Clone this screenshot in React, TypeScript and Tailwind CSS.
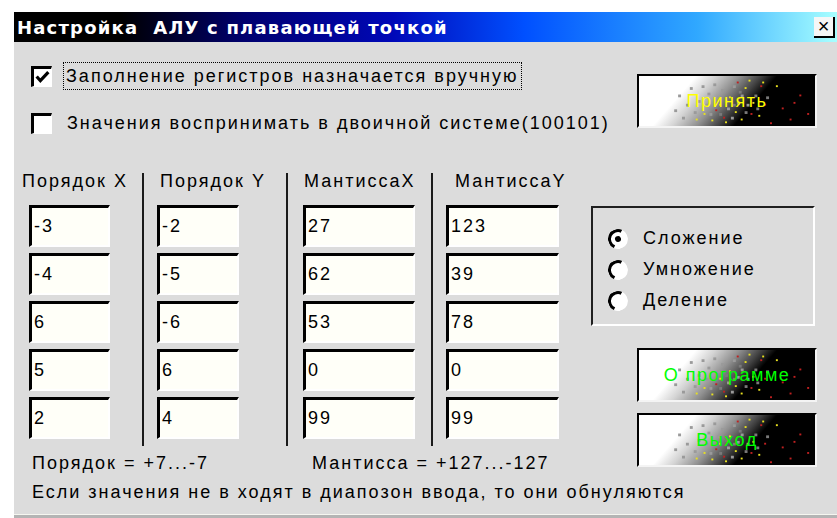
import React from "react";

type Dot = [number, number];

const yellowDots: Dot[] = [
  [58, 46], [66, 40], [74, 47], [82, 30], [92, 22], [98, 38], [108, 12], [116, 28],
  [126, 6], [88, 49], [104, 46], [122, 42], [112, 4], [140, 10],
];
const redDots: Dot[] = [
  [78, 36], [114, 40], [124, 10], [146, 34], [154, 46], [164, 20], [172, 40],
  [134, 50], [100, 6], [86, 44], [158, 28], [128, 30],
];
const grayDots: Dot[] = [
  [40, 20], [48, 30], [52, 12], [60, 26], [70, 18], [76, 8], [64, 10], [56, 38],
  [84, 14], [90, 34], [96, 10], [44, 44], [36, 36], [68, 30], [80, 22], [104, 20],
  [110, 30], [72, 40], [94, 44], [100, 28],
];
const lightDots: Dot[] = [
  [102, 16], [118, 20], [96, 30], [108, 38], [120, 34], [88, 26], [130, 22], [82, 40],
];

function Speckle() {
  return (
    <svg
      viewBox="0 0 180 54"
      preserveAspectRatio="none"
      className="absolute inset-0 w-full h-full"
    >
      {grayDots.map(([x, y], i) => (
        <rect key={"g" + i} x={x} y={y} width="3" height="3" fill="#9a9a9a" />
      ))}
      {lightDots.map(([x, y], i) => (
        <rect key={"l" + i} x={x} y={y} width="3" height="3" fill="#7a7a7a" />
      ))}
      {yellowDots.map(([x, y], i) => (
        <rect key={"y" + i} x={x} y={y} width="2" height="2" fill="#e8e020" />
      ))}
      {redDots.map(([x, y], i) => (
        <rect key={"r" + i} x={x} y={y} width="2" height="2" fill="#c02020" />
      ))}
    </svg>
  );
}

function FancyButton({ label, textClass }: { label: string; textClass: string }) {
  return (
    <div className="relative w-[180px] h-[54px] border-2 border-t-black border-l-black border-r-[#f4f4f4] border-b-[#f4f4f4] bg-[linear-gradient(131deg,#ffffff_0%,#ffffff_26%,#d4d4d4_35%,#909090_46%,#404040_56%,#000000_63%,#000000_100%)] flex items-center justify-center overflow-hidden">
      <Speckle />
      <span className={"relative text-[18px] tracking-[1.5px] " + textClass}>{label}</span>
    </div>
  );
}

function Check({ checked }: { checked: boolean }) {
  return (
    <div className="relative w-[21px] h-[21px] shrink-0 bg-white border-t-[3px] border-l-[3px] border-r border-b border-t-black border-l-black border-r-white border-b-white">
      {checked && (
        <svg viewBox="0 0 16 16" className="absolute left-[0px] top-[0px] w-[17px] h-[17px]">
          <path d="M2.5 7 L6 11 L13.5 3" stroke="black" strokeWidth="3" fill="none" />
        </svg>
      )}
    </div>
  );
}

function Radio({ checked }: { checked: boolean }) {
  return (
    <div className="relative w-[20px] h-[20px] shrink-0 rounded-full bg-white border-[3px] border-t-black border-l-black border-r-white border-b-white rotate-[-20deg]">
      {checked && (
        <div className="absolute left-1/2 top-1/2 w-[6px] h-[6px] -translate-x-1/2 -translate-y-1/2 rounded-full bg-black" />
      )}
    </div>
  );
}

function Field({ value, width }: { value: string; width: string }) {
  return (
    <div
      className={
        "h-[42px] bg-[#fffff8] border-t-[3px] border-l-[3px] border-r-2 border-b-2 border-t-black border-l-black border-r-white border-b-white flex items-center pl-[2px] text-[18px] " +
        width
      }
    >
      {value}
    </div>
  );
}

type Column = {
  title: string;
  values: string[];
  colW: string;
  headPad: string;
  fieldPad: string;
  fieldW: string;
};

const columns: Column[] = [
  { title: "Порядок X", values: ["-3", "-4", "6", "5", "2"], colW: "w-[120px]", headPad: "pl-0", fieldPad: "pl-[7px]", fieldW: "w-[81px]" },
  { title: "Порядок Y", values: ["-2", "-5", "-6", "6", "4"], colW: "w-[142px]", headPad: "pl-[16px]", fieldPad: "pl-[13px]", fieldW: "w-[82px]" },
  { title: "МантиссаX", values: ["27", "62", "53", "0", "99"], colW: "w-[143px]", headPad: "pl-[16px]", fieldPad: "pl-[15px]", fieldW: "w-[112px]" },
  { title: "МантиссаY", values: ["123", "39", "78", "0", "99"], colW: "w-[140px]", headPad: "pl-[22px]", fieldPad: "pl-[13px]", fieldW: "w-[113px]" },
];

function Separator() {
  return <div className="w-[2px] h-[273px] mt-[3px] bg-[#1a1a1a] shrink-0" />;
}

function RegisterColumn({ col }: { col: Column }) {
  return (
    <div className={"flex flex-col shrink-0 " + col.colW}>
      <div className={"h-[22px] flex items-center whitespace-nowrap " + col.headPad}>{col.title}</div>
      <div className={"mt-[13px] flex flex-col gap-[6px] " + col.fieldPad}>
        {col.values.map((v, i) => (
          <Field key={i} value={v} width={col.fieldW} />
        ))}
      </div>
    </div>
  );
}

export default function App() {
  return (
    <div className="w-[837px] h-[518px] bg-white pl-[14px] pt-[12px] overflow-hidden font-['Liberation_Sans',Arial,sans-serif] text-[18px] tracking-[2px] text-black">
      <div className="w-[823px] h-[503px] bg-[#dcdcdc] flex flex-col border-b border-b-[#f6f6f0]">
        {/* caption */}
        <div className="h-[30px] shrink-0 flex items-center justify-between pl-[3px] pr-[2px] bg-[linear-gradient(to_right,#000000_0%,#000000_13%,#00006e_28%,#0008b8_46%,#0050ff_62%,#30a8ff_83%,#a8ffff_100%)]">
          <span className="font-['DejaVu_Sans',sans-serif] font-bold text-[18px] tracking-[1.2px] text-white whitespace-nowrap">
            Настройка&nbsp; АЛУ с плавающей точкой
          </span>
          <div className="w-[21px] h-[21px] bg-[#f6f6f6] border-r-2 border-b-2 border-r-black border-b-black flex items-center justify-center text-[20px] leading-none tracking-normal">
            ×
          </div>
        </div>

        {/* client area */}
        <div className="flex flex-1">
          {/* left part */}
          <div className="w-[577px] shrink-0 flex flex-col">
            <div className="mt-[20px] h-[28px] flex items-center pl-[17px]">
              <Check checked />
              <div className="ml-[11px] h-[28px] flex items-center px-[2px] border border-dotted border-black whitespace-nowrap">
                Заполнение регистров назначается вручную
              </div>
            </div>
            <div className="mt-[19px] h-[28px] flex items-center pl-[17px]">
              <Check checked={false} />
              <div className="ml-[15px] whitespace-nowrap">
                Значения воспринимать в двоичной системе(100101)
              </div>
            </div>

            <div className="mt-[33px] h-[276px] flex pl-[8px]">
              <RegisterColumn col={columns[0]} />
              <Separator />
              <RegisterColumn col={columns[1]} />
              <Separator />
              <RegisterColumn col={columns[2]} />
              <Separator />
              <RegisterColumn col={columns[3]} />
            </div>

            <div className="mt-[7px] h-[20px] flex items-center whitespace-nowrap">
              <span className="pl-[18px] w-[298px]">Порядок = +7...-7</span>
              <span>Мантисса = +127...-127</span>
            </div>
            <div className="mt-[9px] h-[20px] flex items-center pl-[18px] whitespace-nowrap">
              Если значения не в ходят в диапозон ввода, то они обнуляются
            </div>
          </div>

          {/* right part */}
          <div className="flex flex-col">
            <div className="mt-[32px] ml-[46px]">
              <FancyButton label="Принять" textClass="text-[#ffff00]" />
            </div>

            <div className="mt-[78px] w-[224px] h-[120px] border-2 border-t-[#202020] border-l-[#202020] border-r-white border-b-white flex flex-col pt-[15px] pl-[15px]">
              {[
                { label: "Сложение", on: true },
                { label: "Умножение", on: false },
                { label: "Деление", on: false },
              ].map((r) => (
                <div key={r.label} className="h-[31px] flex items-center">
                  <Radio checked={r.on} />
                  <span className="ml-[15px] whitespace-nowrap">{r.label}</span>
                </div>
              ))}
            </div>

            <div className="mt-[22px] ml-[46px]">
              <FancyButton label="О программе" textClass="text-[#00ff00]" />
            </div>
            <div className="mt-[11px] ml-[46px]">
              <FancyButton label="Выход" textClass="text-[#00ff00]" />
            </div>
          </div>
        </div>
      </div>
      <div className="w-[823px] h-[3px] bg-[#b4b4b4]" />
    </div>
  );
}
